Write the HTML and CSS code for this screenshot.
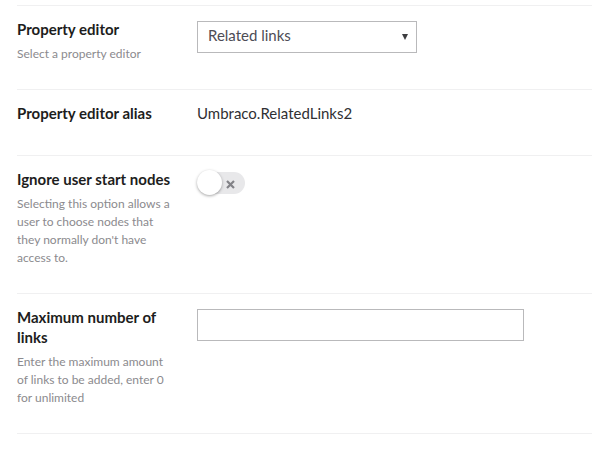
FILE: index.html
```html
<!DOCTYPE html>
<html>
<head>
<meta charset="utf-8">
<link rel="stylesheet" href="styles.css">
</head>
<body>
<div class="panel">
  <div class="group">
    <div class="label-col">
      <div class="label">Property editor</div>
      <div class="desc">Select a property editor</div>
    </div>
    <div class="control-col">
      <div class="select">
        <span class="select-text">Related links</span>
        <span class="caret"></span>
      </div>
    </div>
  </div>
  <div class="group group-compact">
    <div class="label-col">
      <div class="label">Property editor alias</div>
    </div>
    <div class="control-col">
      <div class="value">Umbraco.RelatedLinks2</div>
    </div>
  </div>
  <div class="group">
    <div class="label-col">
      <div class="label">Ignore user start nodes</div>
      <div class="desc">Selecting this option allows a user to choose nodes that they normally don't have access to.</div>
    </div>
    <div class="control-col">
      <div class="toggle">
        <span class="knob"></span>
        <svg class="toggle-x" width="9" height="9" viewBox="0 0 9 9"><path d="M1 1 L8 8 M8 1 L1 8" stroke="#828287" stroke-width="2.2" fill="none"/></svg>
      </div>
    </div>
  </div>
  <div class="group">
    <div class="label-col">
      <div class="label">Maximum number of links</div>
      <div class="desc">Enter the maximum amount of links to be added, enter 0 for unlimited</div>
    </div>
    <div class="control-col">
      <div class="input"></div>
    </div>
  </div>
</div>
</body>
</html>
```
FILE: styles.css
```css
html, body {
  margin: 0;
  padding: 0;
  background: #ffffff;
}
body {
  font-family: Lato, "Open Sans", sans-serif;
  width: 592px;
  height: 465px;
  overflow: hidden;
}
.panel {
  margin-left: 17px;
  padding-top: 5px;
}
.panel::before {
  content: "";
  display: block;
  height: 1px;
  background: #f0f0f1;
}
.group {
  display: flex;
  gap: 24px;
  padding: 13px 0 26px;
  border-bottom: 1px solid #f0f0f1;
}
.group-compact {
  padding-bottom: 32px;
}
.label-col {
  width: 156px;
  flex: none;
}
.label {
  font-size: 15px;
  line-height: 20px;
  font-weight: 700;
  color: #1d1d20;
}
.desc {
  margin-top: 6px;
  font-size: 12px;
  line-height: 18px;
  color: #8b8a8e;
}
.control-col {
  padding-top: 2px;
}
.select {
  box-sizing: border-box;
  width: 220px;
  height: 32px;
  border: 1px solid #b9b9bb;
  display: flex;
  align-items: flex-start;
  justify-content: space-between;
  padding: 3px 8px 0 10px;
}
.select-text {
  font-size: 15px;
  line-height: 20px;
  color: #4d4c55;
}
.caret {
  width: 0;
  height: 0;
  border-left: 3.5px solid transparent;
  border-right: 3.5px solid transparent;
  border-top: 6px solid #3d3d40;
  margin-top: 9px;
}
.value {
  margin-top: -2px;
  font-size: 15px;
  line-height: 20px;
  color: #303033;
}
.toggle {
  position: relative;
  width: 48px;
  height: 22px;
  margin-top: 1px;
  border-radius: 11px;
  background: #e8e8ea;
}
.knob {
  position: absolute;
  left: 0;
  top: -2px;
  width: 25px;
  height: 25px;
  border-radius: 50%;
  background: #ffffff;
  box-shadow: 0 1px 3px rgba(0, 0, 0, 0.35);
}
.toggle-x {
  position: absolute;
  left: 29px;
  top: 8px;
}
.input {
  box-sizing: border-box;
  width: 327px;
  height: 32px;
  border: 1px solid #b9b9bb;
  background: #fff;
}
```
